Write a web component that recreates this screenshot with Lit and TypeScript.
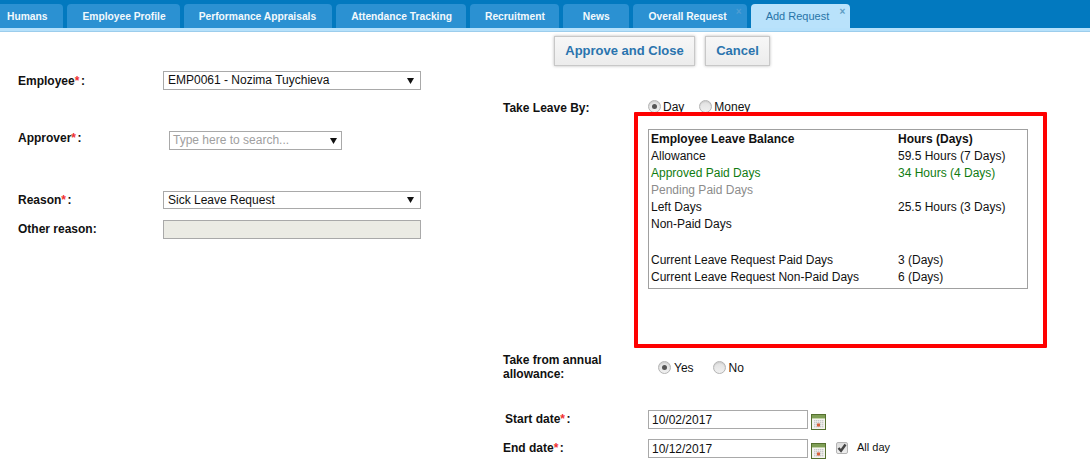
import { LitElement, html, css, svg } from "lit";
import { customElement } from "lit/decorators.js";

const arrow = html`<svg class="arrow" width="7" height="6" viewBox="0 0 7 6"><path d="M0 0H7L3.5 6Z" fill="#111"/></svg>`;

const calendar = html`<svg class="cal" width="15" height="16" viewBox="0 0 15 16">
  <rect x="0.5" y="0.5" width="14" height="15" fill="#f4f4f0" stroke="#55702f"/>
  <rect x="1" y="1" width="13" height="3" fill="#7f9f56"/>
  <rect x="1" y="4" width="13" height="1" fill="#c3d3a8"/>
  ${[6, 8, 10, 12].flatMap((y) =>
    [3, 5, 7, 9, 11].map((x) => svg`<rect x=${x} y=${y} width="1.4" height="1.4" fill="#c9c9c9"/>`)
  )}
  <rect x="6" y="9.5" width="3" height="3" fill="#d9603b"/>
</svg>`;

interface Tab {
  name: string;
  left: number;
  right: number;
  closable?: boolean;
  active?: boolean;
}

const TABS: Tab[] = [
  { name: "Humans", left: 15, right: 16 },
  { name: "Employee Profile", left: 15, right: 14 },
  { name: "Performance Appraisals", left: 15, right: 16 },
  { name: "Attendance Tracking", left: 15, right: 14 },
  { name: "Recruitment", left: 15, right: 14 },
  { name: "News", left: 20, right: 19 },
  { name: "Overall Request", left: 16, right: 20, closable: true },
  { name: "Add Request", left: 15, right: 21, closable: true, active: true },
];

@customElement("app-root")
export class AppRoot extends LitElement {
  static styles = css`
    :host {
      display: block;
      position: relative;
      width: 1090px;
      height: 468px;
      overflow: hidden;
      background: #fff;
      font-family: "Liberation Sans", Arial, sans-serif;
      font-size: 12px;
      color: #111;
    }
    .tabs {
      display: flex;
      gap: 4px;
      height: 28px;
      box-sizing: border-box;
      padding-top: 4px;
      background: #0279bf;
      overflow: hidden;
    }
    .strip {
      height: 4px;
      background: #b6e1fb;
      border-bottom: 1px solid #9ccdec;
      box-sizing: border-box;
    }
    .tab {
      position: relative;
      flex: none;
      height: 24px;
      line-height: 25px;
      background: #2b91d2;
      color: #f2f9fd;
      font-weight: bold;
      font-size: 10.25px;
      border-radius: 4px 4px 0 0;
    }
    .tab:first-child { margin-left: -8px; }
    .tab.active {
      background: #b9e2fb;
      color: #2874a8;
      font-weight: normal;
      font-size: 11px;
    }
    .x {
      position: absolute;
      right: 5px;
      top: 1px;
      font-size: 10px;
      line-height: 14px;
      font-weight: bold;
      color: #4f9dd2;
    }
    .active .x { color: #5f9cc4; }
    .toolbar {
      display: flex;
      gap: 10px;
      height: 30px;
      margin-top: 4px;
      padding: 0 0 0 554px;
      margin-bottom: 1px;
    }
    button {
      box-sizing: border-box;
      height: 30px;
      padding: 0 0 2px;
      border: 1px solid #c8c8c8;
      background: linear-gradient(#f7f7f7, #ececec);
      box-shadow: 0 0 3px #bbb;
      color: #2a74ae;
      font: bold 13px "Liberation Sans", Arial, sans-serif;
    }
    .approve { width: 141px; }
    .cancel { width: 65px; }
    .body {
      display: grid;
      grid-template-columns: 503px 1fr;
    }
    .left { padding-left: 18px; }
    .row {
      display: grid;
      grid-template-columns: 145px 258px;
      align-items: center;
    }
    .label { font-weight: bold; }
    .req { color: #f03030; margin: 0 1.5px 0 0; }
    .employee { margin-top: 4px; }
    .approver { margin-top: 41px; }
    .approver .label { margin-top: -5px; }
    .reason { margin-top: 41px; }
    .reason .select { height: 18px; }
    .other { margin-top: 11px; }
    .other .label { margin-top: -2px; }
    .select {
      box-sizing: border-box;
      height: 19px;
      border: 1px solid #a9a9a9;
      background: #fff;
      display: flex;
      align-items: center;
      justify-content: space-between;
      padding: 0 6px 0 4px;
      line-height: 17px;
    }
    .combo {
      width: 173px;
      margin-left: 6px;
      color: #a0a0a0;
      padding-left: 3px;
      padding-right: 4px;
    }
    .arrow { flex: none; }
    .field {
      display: block;
      box-sizing: border-box;
      width: 258px;
      height: 19px;
      border: 1px solid #a9a9a9;
      background: #fff;
      padding: 0 3px;
      margin: 0;
      font: 12px "Liberation Sans", Arial, sans-serif;
      color: #111;
      outline: none;
    }
    .field.off { background: #ebebe4; }
    .right { display: flex; flex-direction: column; }
    .by {
      margin-top: 30px;
      display: grid;
      grid-template-columns: 145px 1fr;
      height: 22px;
    }
    .by .label { margin-top: 4px; }
    .radios { display: flex; align-items: center; height: 15px; margin-top: 2px; }
    .radio { display: inline-flex; align-items: center; gap: 2px; margin-right: 15px; }
    .dot {
      box-sizing: border-box;
      width: 13px;
      height: 13px;
      border-radius: 50%;
      border: 1px solid #b4b4b4;
      background: linear-gradient(#e0e0e0, #f0f0f0);
      display: inline-flex;
      align-items: center;
      justify-content: center;
      box-shadow: inset 0 1px 1px #ccc;
    }
    .dot.on::after {
      content: "";
      width: 5px;
      height: 5px;
      border-radius: 50%;
      background: #555;
    }
    .balance {
      box-sizing: border-box;
      margin: 10px 0 0 145px;
      width: 380px;
      height: 160px;
      border: 1px solid #a0a0a0;
      padding: 1px 2px;
      display: grid;
      grid-template-columns: 247px 1fr;
      grid-auto-rows: auto;
      align-content: start;
      line-height: 17px;
    }
    .bold { font-weight: bold; }
    .green { color: #107c10; }
    .grey { color: #8c8c8c; }
    .gap { grid-column: 1 / -1; height: 19px; }
    .annual {
      margin-top: 64px;
      display: grid;
      grid-template-columns: 155px 1fr;
      align-items: center;
      height: 28px;
    }
    .annual .label { line-height: 14px; }
    .annual .radios { margin: 1px 0 0; }
    .annual .radio { margin-right: 19px; gap: 3px; }
    .date {
      display: grid;
      grid-template-columns: 145px 160px auto auto auto;
      justify-content: start;
      align-items: start;
      height: 19px;
    }
    .date .label { line-height: 19px; }
    .date .field { width: 160px; }
    .start { margin-top: 29px; }
    .start .label { padding-left: 2px; }
    .end { margin-top: 10px; }
    .cal { margin: 4px 0 0 3px; display: block; }
    .check {
      box-sizing: border-box;
      width: 12px;
      height: 12px;
      margin: 3px 0 0 10px;
      border: 1px solid #b4b4b4;
      border-radius: 2px;
      background: linear-gradient(#dcdcdc, #eeeeee);
      display: flex;
      align-items: center;
      justify-content: center;
    }
    .allday { margin: 1px 0 0 9px; font-size: 11px; line-height: 14px; }
    .annotation {
      position: absolute;
      left: 634px;
      top: 112px;
      width: 413px;
      height: 236px;
      box-sizing: border-box;
      border: 4px solid #fe0000;
      border-radius: 1px;
      pointer-events: none;
    }
  `;

  private tab(t: Tab) {
    return html`<div class="tab ${t.active ? "active" : ""}" style="padding: 0 ${t.right}px 0 ${t.left}px">${t.name}${t.closable ? html`<span class="x">×</span>` : ""}</div>`;
  }

  private balanceRow(a: string, b = "", cls = "") {
    return html`<div class=${cls}>${a}</div><div class=${cls}>${b}</div>`;
  }

  private radio(name: string, on = false) {
    return html`<span class="radio"><span class="dot ${on ? "on" : ""}"></span>${name}</span>`;
  }

  render() {
    return html`
      <div class="tabs">${TABS.map((t) => this.tab(t))}</div>
      <div class="strip"></div>
      <div class="toolbar">
        <button class="approve">Approve and Close</button>
        <button class="cancel">Cancel</button>
      </div>
      <div class="body">
        <div class="left">
          <div class="row employee">
            <div class="label">Employee<span class="req">*</span>:</div>
            <div class="select"><span>EMP0061 - Nozima Tuychieva</span>${arrow}</div>
          </div>
          <div class="row approver">
            <div class="label">Approver<span class="req">*</span>:</div>
            <div class="select combo"><span>Type here to search...</span>${arrow}</div>
          </div>
          <div class="row reason">
            <div class="label">Reason<span class="req">*</span>:</div>
            <div class="select"><span>Sick Leave Request</span>${arrow}</div>
          </div>
          <div class="row other">
            <div class="label">Other reason:</div>
            <input class="field off" disabled />
          </div>
        </div>
        <div class="right">
          <div class="by">
            <div class="label">Take Leave By:</div>
            <div class="radios">${this.radio("Day", true)}${this.radio("Money")}</div>
          </div>
          <div class="balance">
            ${this.balanceRow("Employee Leave Balance", "Hours (Days)", "bold")}
            ${this.balanceRow("Allowance", "59.5 Hours (7 Days)")}
            ${this.balanceRow("Approved Paid Days", "34 Hours (4 Days)", "green")}
            ${this.balanceRow("Pending Paid Days", "", "grey")}
            ${this.balanceRow("Left Days", "25.5 Hours (3 Days)")}
            ${this.balanceRow("Non-Paid Days")}
            <div class="gap"></div>
            ${this.balanceRow("Current Leave Request Paid Days", "3 (Days)")}
            ${this.balanceRow("Current Leave Request Non-Paid Days", "6 (Days)")}
          </div>
          <div class="annual">
            <div class="label">Take from annual<br />allowance:</div>
            <div class="radios">${this.radio("Yes", true)}${this.radio("No")}</div>
          </div>
          <div class="date start">
            <div class="label">Start date<span class="req">*</span>:</div>
            <input class="field" .value=${"10/02/2017"} />
            ${calendar}
          </div>
          <div class="date end">
            <div class="label">End date<span class="req">*</span>:</div>
            <input class="field" .value=${"10/12/2017"} />
            ${calendar}
            <span class="check"><svg width="10" height="10" viewBox="0 0 10 10"><path d="M1.5 5L4 7.8L8.5 1.5" fill="none" stroke="#444" stroke-width="2.4"/></svg></span>
            <span class="allday">All day</span>
          </div>
        </div>
      </div>
      <div class="annotation"></div>
    `;
  }
}
